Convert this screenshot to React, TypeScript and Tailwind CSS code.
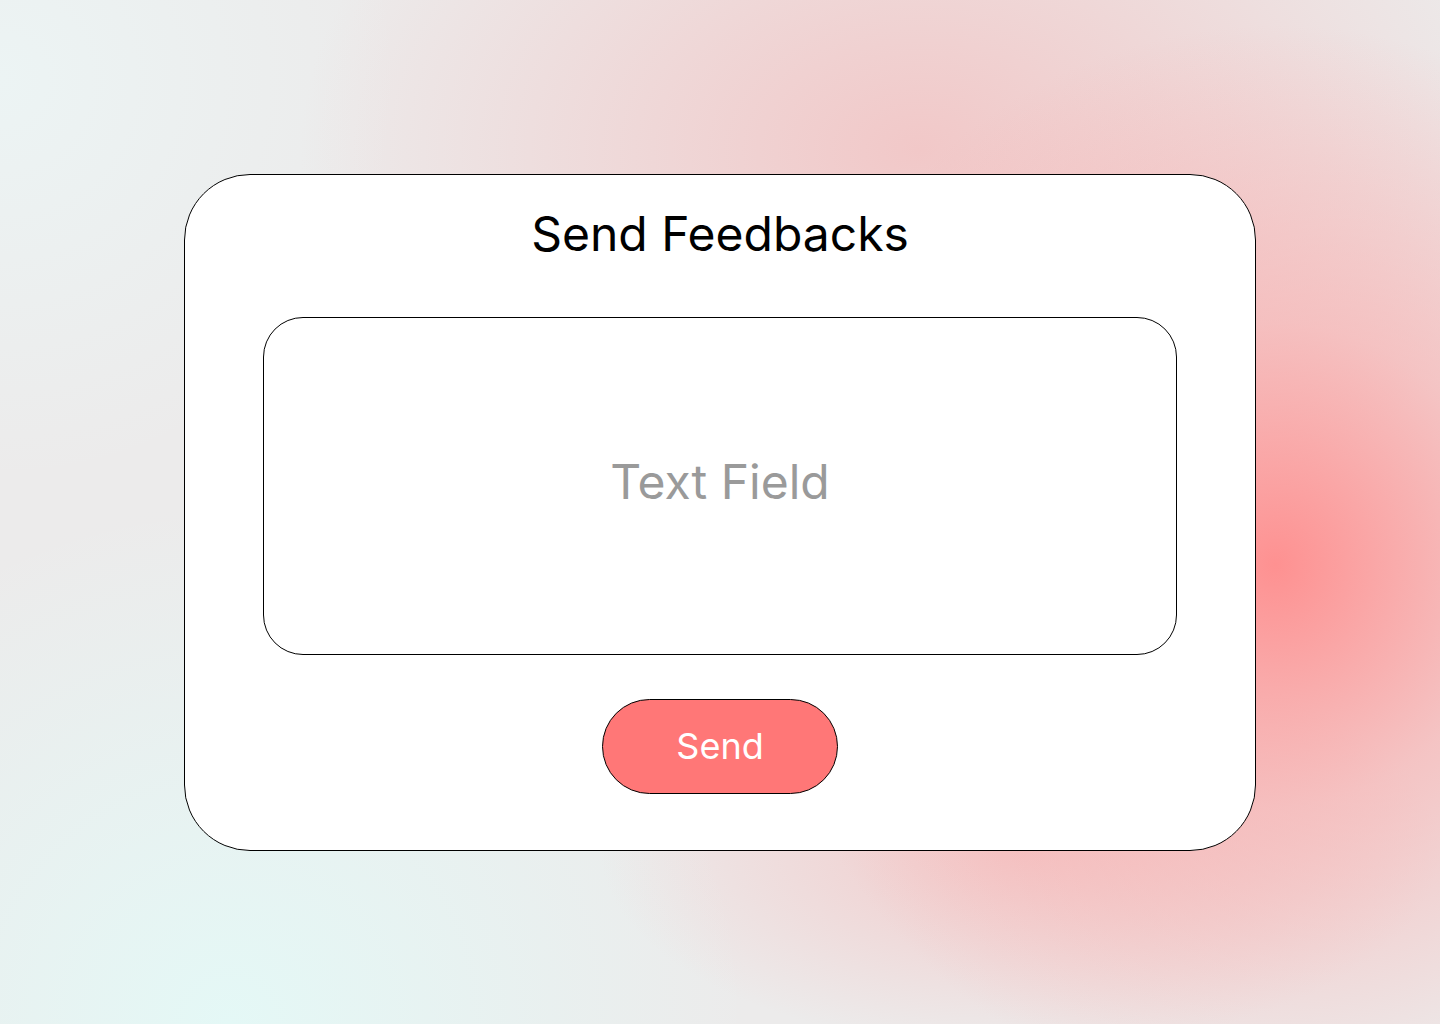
import React from "react";

export default function App() {
  return (
    <div
      className="flex min-h-screen w-full items-center justify-center bg-[#ecebeb] bg-[radial-gradient(ellipse_520px_540px_at_1275px_565px,rgba(255,140,140,0.95)_0%,rgba(250,170,170,0.6)_45%,rgba(245,200,200,0)_100%),radial-gradient(ellipse_620px_420px_at_920px_150px,rgba(242,196,196,0.9)_0%,rgba(242,200,200,0)_100%),radial-gradient(ellipse_420px_200px_at_1020px_850px,rgba(245,190,190,0.75)_0%,rgba(245,200,200,0)_100%),radial-gradient(ellipse_520px_520px_at_230px_1024px,rgba(228,248,246,1)_0%,rgba(230,245,243,0)_100%),radial-gradient(ellipse_400px_400px_at_0px_80px,rgba(236,244,244,1)_0%,rgba(236,244,244,0)_100%)]"
      style={{ fontFamily: "Inter, 'Noto Sans', sans-serif" }}
    >
      <div className="box-border flex h-[677px] w-[1072px] flex-col items-center rounded-[66px] border border-black bg-white pt-[30px]">
        <h1 className="h-[58px] text-[48px] leading-[58px] font-normal text-black">
          Send Feedbacks
        </h1>
        <div className="mt-[54px] box-border flex h-[338px] w-[914px] items-center justify-center rounded-[40px] border border-black pb-[7px]">
          <span className="text-[48px] leading-[58px] text-[#9a9a9a]">Text Field</span>
        </div>
        <button className="mt-[44px] box-border flex h-[95px] w-[236px] items-center justify-center rounded-full border border-black bg-[#ff7777] text-[36px] leading-[44px] text-white">
          Send
        </button>
      </div>
    </div>
  );
}
